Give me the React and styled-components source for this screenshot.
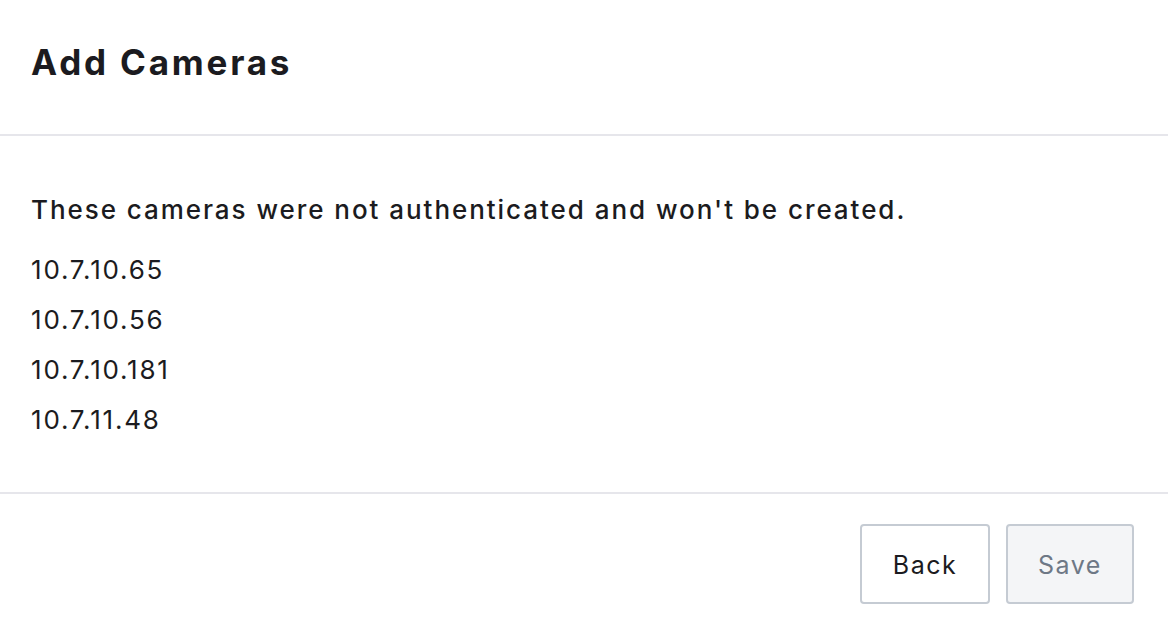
import React from "react";
import styled, { createGlobalStyle } from "styled-components";

const Global = createGlobalStyle`
  html, body { margin: 0; padding: 0; background: #fff; }
  body { font-family: "Inter", "Liberation Sans", sans-serif; color: #1b1b20; }
  * { box-sizing: border-box; }
`;

const Modal = styled.div`
  width: 1168px;
  height: 624px;
  display: flex;
  flex-direction: column;
  background: #fff;
`;

const Header = styled.header`
  height: 136px;
  display: flex;
  align-items: center;
  padding: 0 31px 10px;
  border-bottom: 2px solid #e6e6eb;
`;

const Title = styled.h1`
  margin: 0;
  font-size: 35px;
  font-weight: 700;
  letter-spacing: 2.8px;
`;

const Body = styled.section`
  height: 358px;
  padding: 56px 31px 0;
  border-bottom: 2px solid #e6e6eb;
`;

const Message = styled.p`
  margin: 0 0 17px;
  font-size: 26px;
  font-weight: 500;
  line-height: 36px;
  letter-spacing: 1.95px;
`;

const IpList = styled.ul`
  list-style: none;
  margin: 0;
  padding: 0;
`;

const Ip = styled.li`
  font-size: 26px;
  line-height: 50px;
  letter-spacing: 1.8px;
`;

const Footer = styled.footer`
  display: flex;
  justify-content: flex-end;
  gap: 16px;
  padding: 30px 34px 0;
`;

const Button = styled.button`
  height: 80px;
  width: ${(p) => p.w}px;
  padding-top: 3px;
  border: 2px solid #c5cbd3;
  border-radius: 4px;
  background: ${(p) => (p.disabled ? "#f4f5f7" : "#fff")};
  color: ${(p) => (p.disabled ? "#6e7886" : "#1b1b20")};
  font-family: inherit;
  font-size: 25px;
  font-weight: 400;
  letter-spacing: 1.5px;
  cursor: pointer;
`;

const ips = ["10.7.10.65", "10.7.10.56", "10.7.10.181", "10.7.11.48"];

export default function App() {
  return (
    <>
      <Global />
      <Modal>
        <Header>
          <Title>Add Cameras</Title>
        </Header>
        <Body>
          <Message>These cameras were not authenticated and won't be created.</Message>
          <IpList>
            {ips.map((ip) => (
              <Ip key={ip}>{ip}</Ip>
            ))}
          </IpList>
        </Body>
        <Footer>
          <Button w={130}>Back</Button>
          <Button w={128} disabled>
            Save
          </Button>
        </Footer>
      </Modal>
    </>
  );
}
